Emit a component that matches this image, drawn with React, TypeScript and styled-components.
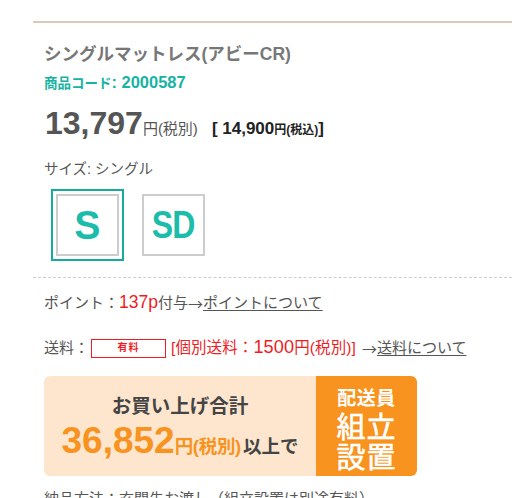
import React from "react";
import styled, { createGlobalStyle } from "styled-components";

const Global = createGlobalStyle`
  html, body { margin: 0; padding: 0; background: #fff; }
  body {
    font-family: "Liberation Sans", "Noto Sans CJK JP", sans-serif;
    color: #555;
    overflow: hidden;
  }
`;

const Page = styled.div`
  padding: 21px 0 0 33px;
`;

const TopRule = styled.div`
  height: 2px;
  background: #dccbb3;
`;

const Body = styled.div`
  padding: 19px 0 0 11px;
  display: flex;
  flex-direction: column;
`;

const Title = styled.h1`
  margin: 0;
  font-size: 17.5px;
  line-height: 24px;
  font-weight: 700;
  color: #777;
`;

const Code = styled.div`
  margin-top: 8px;
  font-size: 13.5px;
  line-height: 20px;
  font-weight: 700;
  color: #16b3a3;
`;

const Num = styled.span<{ $scale?: number }>`
  font-size: ${(p) => p.$scale ?? 1.17}em;
  line-height: 1;
`;

const Arrow = styled.span`
  font-family: "Noto Sans CJK JP", sans-serif;
  line-height: 1;
`;

const PriceRow = styled.div`
  margin-top: 10px;
  display: flex;
  align-items: baseline;
  color: #555;
  font-weight: 700;
`;

const BigPrice = styled.span`
  font-size: 32px;
  line-height: 38px;
  margin-left: 1px;
`;

const Unit = styled.span<{ $size: number }>`
  font-size: ${(p) => p.$size}px;
  font-weight: ${(p) => (p.$size > 13 ? 400 : 700)};
`;

const TaxIn = styled.span`
  margin-left: 14px;
  font-size: 17px;
  color: #222;
  font-weight: 700;
  white-space: pre;
`;

const SizeLabel = styled.div`
  margin-top: 17px;
  font-size: 14.5px;
  line-height: 20px;
`;

const Options = styled.div`
  margin-top: 10px;
  padding-left: 7px;
  display: flex;
  align-items: center;
  gap: 18px;
`;

const Selected = styled.div`
  border: 2px solid #16ab9c;
  padding: 3px;
`;

const OptBox = styled.div`
  width: 59px;
  height: 58px;
  border: 2px solid #cdcdcd;
  display: flex;
  align-items: center;
  justify-content: center;
  background: #fff;
`;

const OptText = styled.span<{ $narrow?: boolean }>`
  font-size: ${(p) => (p.$narrow ? 39 : 40)}px;
  font-weight: 700;
  color: #1cbcab;
  display: inline-block;
  transform: scaleX(${(p) => (p.$narrow ? 0.82 : 0.98)});
  letter-spacing: ${(p) => (p.$narrow ? -1 : 0)}px;
`;

const Dotted = styled.div`
  margin-top: 16px;
  margin-left: -11px;
  border-top: 1px dashed #cfcfcf;
`;

const InfoRow = styled.div<{ $mt: number }>`
  margin-top: ${(p) => p.$mt}px;
  display: flex;
  align-items: center;
  font-size: 15px;
  line-height: 22px;
  height: 22px;
  color: #555;
  white-space: nowrap;
`;

const Red = styled.span`
  color: #ee1c25;
`;

const Link = styled.span`
  text-decoration: underline;
  text-underline-offset: 2px;
`;

const PaidBadge = styled.span`
  width: 73px;
  height: 17px;
  border: 1.5px solid #ee1c25;
  color: #ee1c25;
  font-size: 10px;
  font-weight: 700;
  letter-spacing: 1px;
  display: inline-flex;
  align-items: center;
  justify-content: center;
  margin: 0 5px 0 2px;
  box-sizing: content-box;
`;

const RedText = styled.span`
  color: #ee1c25;
  font-size: 15.5px;
  letter-spacing: 0.1px;
  margin-right: 6px;
`;

const Banner = styled.div`
  margin-top: 17px;
  width: 373px;
  height: 100px;
  display: flex;
  border-radius: 6px;
  overflow: hidden;
`;

const BannerLeft = styled.div`
  flex: 0 0 272px;
  background: #fde6cd;
  display: flex;
  flex-direction: column;
  align-items: center;
  justify-content: center;
  padding-top: 2px;
`;

const BannerTitle = styled.div`
  font-size: 19.5px;
  font-weight: 700;
  color: #444;
  line-height: 24px;
`;

const BannerPrice = styled.div`
  display: flex;
  align-items: baseline;
  font-weight: 700;
  margin-top: 3px;
`;

const OrangeBig = styled.span`
  font-size: 37px;
  line-height: 40px;
  color: #f7931e;
`;

const OrangeSmall = styled.span`
  font-size: 18.5px;
  color: #f7931e;
  letter-spacing: -0.3px;
`;

const DarkSmall = styled.span`
  font-size: 18.5px;
  color: #444;
  margin-left: 2px;
`;

const BannerRight = styled.div`
  flex: 1;
  background: #f7931e;
  color: #fff;
  display: flex;
  flex-direction: column;
  align-items: center;
  justify-content: center;
  font-weight: 700;
  padding-top: 8px;
`;

const RightSmall = styled.div`
  font-size: 19px;
  line-height: 22px;
  letter-spacing: 0.5px;
  margin-bottom: 3px;
`;

const RightBig = styled.div`
  font-size: 29px;
  line-height: 30px;
  font-weight: 400;
  letter-spacing: 1px;
  -webkit-text-stroke: 0.6px #fff;
`;

const Note = styled.div`
  margin-top: 12px;
  font-size: 15px;
  line-height: 22px;
  color: #555;
  white-space: nowrap;
`;

export default function App() {
  return (
    <>
      <Global />
      <Page>
        <TopRule />
        <Body>
          <Title>シングルマットレス(アビーCR)</Title>
          <Code>
            商品コード<Num $scale={1.22}>: 2000587</Num>
          </Code>
          <PriceRow>
            <BigPrice>13,797</BigPrice>
            <Unit $size={15}>円(税別)</Unit>
            <TaxIn>
              {"[ 14,900"}
              <Unit $size={12}>円(税込)</Unit>
              {"]"}
            </TaxIn>
          </PriceRow>
          <SizeLabel>サイズ: シングル</SizeLabel>
          <Options>
            <Selected>
              <OptBox>
                <OptText>S</OptText>
              </OptBox>
            </Selected>
            <OptBox>
              <OptText $narrow>SD</OptText>
            </OptBox>
          </Options>
          <Dotted />
          <InfoRow $mt={14}>
            ポイント：
            <Red>
              <Num>137p</Num>
            </Red>
            付与<Arrow>→</Arrow>
            <Link>ポイントについて</Link>
          </InfoRow>
          <InfoRow $mt={23}>
            送料：<PaidBadge>有料</PaidBadge>
            <RedText>
              [個別送料：<Num>1500</Num>円(税別)]
            </RedText>
            <Arrow>→</Arrow>
            <Link>送料について</Link>
          </InfoRow>
          <Banner>
            <BannerLeft>
              <BannerTitle>お買い上げ合計</BannerTitle>
              <BannerPrice>
                <OrangeBig>36,852</OrangeBig>
                <OrangeSmall>円(税別)</OrangeSmall>
                <DarkSmall>以上で</DarkSmall>
              </BannerPrice>
            </BannerLeft>
            <BannerRight>
              <RightSmall>配送員</RightSmall>
              <RightBig>組立</RightBig>
              <RightBig>設置</RightBig>
            </BannerRight>
          </Banner>
          <Note>納品方法：玄関先お渡し（組立設置は別途有料）</Note>
        </Body>
      </Page>
    </>
  );
}
